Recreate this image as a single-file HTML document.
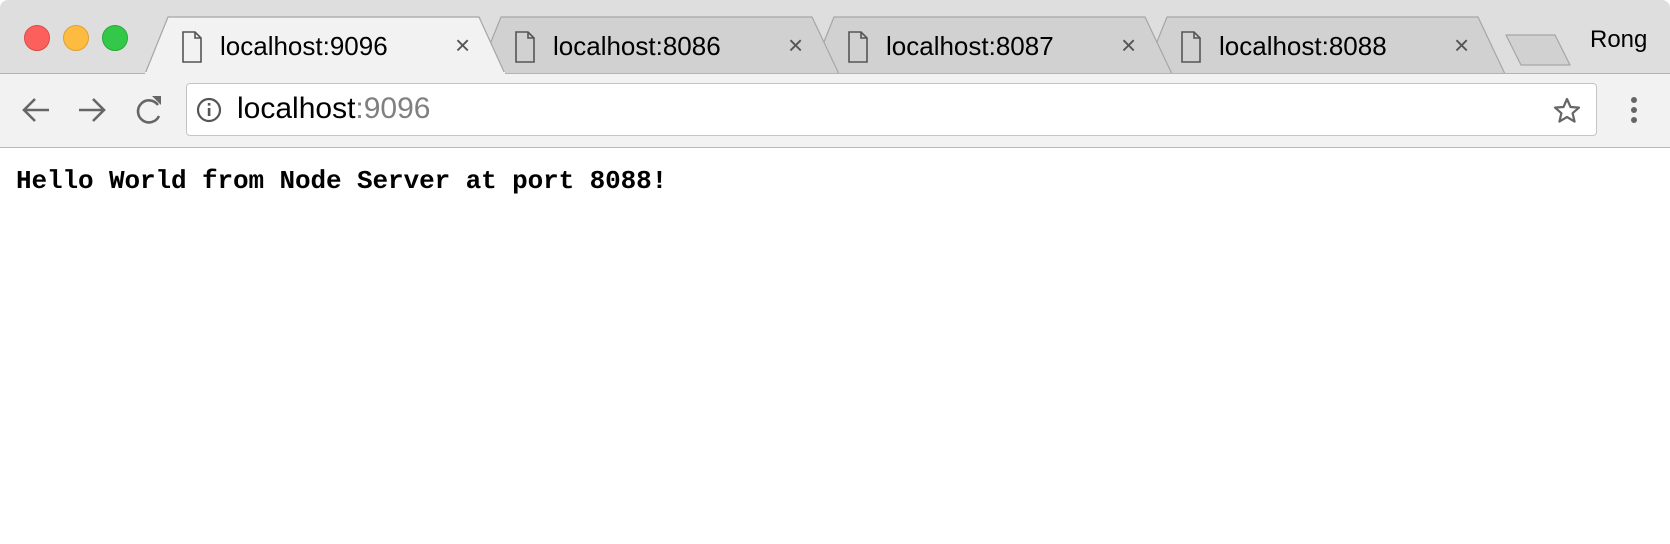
<!DOCTYPE html>
<html><head><meta charset="utf-8"><style>
*{margin:0;padding:0;box-sizing:border-box}
body{width:1670px;height:544px;background:#fff;position:relative;overflow:hidden;font-family:"Liberation Sans",sans-serif}
.strip{position:absolute;left:0;top:0;width:1670px;height:74px;background:#dedede;border-radius:8px 8px 0 0}
.tb{position:absolute;left:0;top:73px;width:1670px;height:75px;background:#f2f2f2;border-top:1px solid #b3b3b3;border-bottom:1px solid #b8b8b8}
.dot{position:absolute;top:25px;width:26px;height:26px;border-radius:50%}
.t{position:absolute;font-size:26px;color:#000;top:31px}
.x{position:absolute;top:32px;font-size:26px;color:#555;line-height:26px}
.omni{position:absolute;left:186px;top:83px;width:1411px;height:53px;background:#fff;border:1px solid #c4c4c4;border-radius:4px}
.page{position:absolute;left:16px;top:166px;font-family:"Liberation Mono",monospace;font-size:26px;font-weight:bold;color:#000;letter-spacing:-0.1px;white-space:pre}
</style></head><body>
<div class="strip"></div>
<svg style="position:absolute;left:0;top:0" width="1670" height="80">
 <g stroke="#a6a6a6" stroke-width="1.2">
  <path d="M1144 74 L1167 17 L1478 17 L1505 74 Z" fill="#d1d1d1"/>
  <path d="M811 74 L834 17 L1145 17 L1172 74 Z" fill="#d1d1d1"/>
  <path d="M478 74 L501 17 L812 17 L839 74 Z" fill="#d1d1d1"/>
  <path d="M145 74 L168 17 L479 17 L505 74 Z" fill="#f2f2f2"/>
  <path d="M1506 35 L1555 35 L1570 65 L1521 65 Z" fill="#d1d1d1" stroke-linejoin="round"/>
 </g>
 <g fill="none" stroke="#555" stroke-width="1.6">
  <path d="M183 32 H195 L201 38 V62 H183 Z M195 32 V38 H201"/>
  <path d="M516 32 H528 L534 38 V62 H516 Z M528 32 V38 H534"/>
  <path d="M849 32 H861 L867 38 V62 H849 Z M861 32 V38 H867"/>
  <path d="M1182 32 H1194 L1200 38 V62 H1182 Z M1194 32 V38 H1200"/>
 </g>
</svg>
<div class="dot" style="left:24px;background:#fc605c;border:1px solid #de4a45"></div>
<div class="dot" style="left:63px;background:#fdbc40;border:1px solid #dea034"></div>
<div class="dot" style="left:102px;background:#34c84a;border:1px solid #27aa35"></div>
<div class="t" style="left:220px">localhost:9096</div>
<div class="t" style="left:553px">localhost:8086</div>
<div class="t" style="left:886px">localhost:8087</div>
<div class="t" style="left:1219px">localhost:8088</div>
<div class="x" style="left:455px">×</div>
<div class="x" style="left:788px">×</div>
<div class="x" style="left:1121px">×</div>
<div class="x" style="left:1454px">×</div>
<div style="position:absolute;left:1590px;top:26px;font-size:24px;color:#000">Rong</div>
<div class="tb"></div>
<div style="position:absolute;left:145px;top:72px;width:360px;height:3px;background:#f2f2f2"></div>
<div class="omni"></div>
<svg style="position:absolute;left:0;top:73px" width="1670" height="75">
 <g fill="none" stroke="#666" stroke-width="2.6">
  <path d="M24 37 H49 M35 26 L24 37 L35 48"/>
  <path d="M79 37 H104 M93 26 L104 37 L93 48"/>
  <path d="M158 32 A11 11 0 1 0 159 43"/>
 </g>
 <path d="M152 23 L161 23 L161 32 Z" fill="#666"/>
 <circle cx="209" cy="37" r="11" fill="none" stroke="#555" stroke-width="2.2"/>
 <rect x="207.8" y="35" width="2.6" height="8" fill="#555"/><rect x="207.8" y="30" width="2.6" height="2.6" fill="#555"/>
 <path d="M1567 26 L1570.5 34 L1579 34.6 L1572.6 40.2 L1574.6 48.6 L1567 44 L1559.4 48.6 L1561.4 40.2 L1555 34.6 L1563.5 34 Z" fill="none" stroke="#666" stroke-width="2.2" stroke-linejoin="round"/>
 <circle cx="1634" cy="27" r="3" fill="#666"/><circle cx="1634" cy="37" r="3" fill="#666"/><circle cx="1634" cy="47" r="3" fill="#666"/>
</svg>
<div style="position:absolute;left:237px;top:92px;font-size:30px;color:#000">localhost<span style="color:#808080">:9096</span></div>
<div class="page">Hello World from Node Server at port 8088!</div>
</body></html>
